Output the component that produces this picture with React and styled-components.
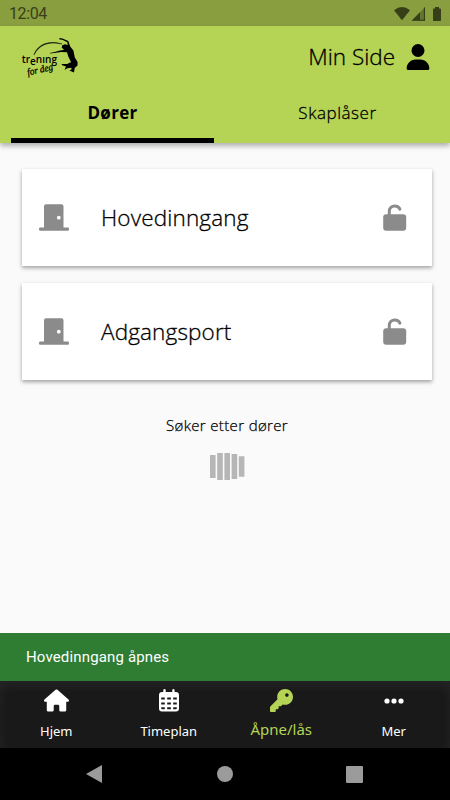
import React, { useState } from "react";
import styled, { createGlobalStyle } from "styled-components";
import { FaHouse, FaKey, FaUser } from "react-icons/fa6";

const GlobalStyle = createGlobalStyle`
  * {
    box-sizing: border-box;
  }
  body {
    margin: 0;
    background: #fafafa;
    font-family: "Open Sans", "Noto Sans", sans-serif;
  }
`;

const Screen = styled.div`
  width: 450px;
  height: 800px;
  display: flex;
  flex-direction: column;
  overflow: hidden;
  background: #fafafa;
`;

const StatusBar = styled.div`
  height: 26px;
  flex-shrink: 0;
  padding: 1px 8px 0 9px;
  display: flex;
  align-items: center;
  justify-content: space-between;
  background: #899e3f;
  color: #373f19;
  font-family: Roboto, sans-serif;
  font-size: 16px;
  letter-spacing: -0.4px;
`;

const Header = styled.header`
  height: 117px;
  flex-shrink: 0;
  display: flex;
  flex-direction: column;
  background: #b5d355;
  box-shadow: 0 3px 5px rgba(0, 0, 0, 0.3);
`;

const TopBar = styled.div`
  height: 61px;
  padding: 0 19px 0 20px;
  display: flex;
  align-items: center;
  justify-content: space-between;
`;

const MyPage = styled.a`
  display: flex;
  align-items: center;
  gap: 10px;
  color: #000;
  font-size: 22.5px;
  line-height: 30px;
  font-weight: 300;
  -webkit-text-stroke: 0.3px #000;
  padding-top: 1px;
`;

const Tabs = styled.div`
  flex: 1;
  display: flex;
`;

const Tab = styled.div`
  flex: 1;
  display: flex;
  flex-direction: column;
  align-items: center;
  justify-content: space-between;
  padding-top: 13px;
  font-size: 17px;
  line-height: 26px;
  cursor: pointer;
  font-weight: ${(props) => (props.$active ? 700 : 300)};
  letter-spacing: ${(props) => (props.$active ? 0.3 : 0.55)}px;
  -webkit-text-stroke: ${(props) => (props.$active ? 0 : 0.3)}px #000;
`;

const Indicator = styled.div`
  width: 203px;
  height: 5px;
  background: ${(props) => (props.$active ? "#000" : "transparent")};
`;

const Content = styled.main`
  flex: 1;
  padding: 26px 18px 0 22px;
  display: flex;
  flex-direction: column;
  gap: 17px;
`;

const Card = styled.div`
  height: 97px;
  padding: 0 25px 0 17px;
  display: flex;
  align-items: center;
  background: #fff;
  color: #8b8b8b;
  box-shadow: 0 2px 4px rgba(0, 0, 0, 0.36);
`;

const CardTitle = styled.span`
  flex: 1;
  margin-left: 32px;
  color: #000;
  font-size: 22.5px;
  line-height: 30px;
  font-weight: 300;
  letter-spacing: 0.15px;
  -webkit-text-stroke: 0.3px #000;
`;

const Searching = styled.div`
  margin-top: 17px;
  display: flex;
  flex-direction: column;
  align-items: center;
  gap: 17px;
  color: #000;
  font-size: 15px;
  font-weight: 300;
  letter-spacing: 0.35px;
  -webkit-text-stroke: 0.25px #000;
  line-height: 22px;
`;

const Snackbar = styled.div`
  height: 48px;
  flex-shrink: 0;
  padding-left: 26px;
  display: flex;
  align-items: center;
  background: #2e7d32;
  color: #fff;
  font-family: Roboto, sans-serif;
  font-size: 15px;
  letter-spacing: 0.15px;
`;

const BottomNav = styled.nav`
  height: 67px;
  flex-shrink: 0;
  display: flex;
  background: #191919;
  box-shadow: inset 0 5px 12px rgba(255, 255, 255, 0.05);
`;

const NavItem = styled.div`
  flex: 1;
  padding-top: 7px;
  display: flex;
  flex-direction: column;
  align-items: center;
  color: ${(props) => (props.$active ? "#b5d355" : "#fff")};
`;

const NavIcon = styled.div`
  height: 25px;
  display: flex;
  align-items: center;
`;

const NavLabel = styled.span`
  margin-top: ${(props) => (props.$active ? 4 : 6)}px;
  font-family: "Noto Sans", sans-serif;
  font-size: ${(props) => (props.$active ? 15 : 13)}px;
  line-height: 24px;
`;

const SystemBar = styled.div`
  height: 52px;
  flex-shrink: 0;
  padding: 0 87px 0 86px;
  display: flex;
  align-items: center;
  justify-content: space-between;
  background: #000;
`;

const Logo = () => (
  <svg width="60" height="44" viewBox="20 34 60 44">
    <path
      d="M34 54C36 46 46 38 62 43C48 40 39 44 34 54Z"
      stroke="#000"
      strokeWidth="0.4"
    />
    <path d="M59.3 37.1L62.5 37.4L68.3 40.1L70.2 45.6L73.4 49.5L74.8 56.5L77.6 61L77.5 64.5L74.7 67L74 71.4L69.4 69.6L71.5 68.4L71.4 66.8L67.3 67.2L64.5 69L66 65.4L61.6 64.1L62 62.9L67.2 63L70 61.4L71.2 61.6L68.3 55.6L67 51.2L61 50.9L54.3 52.1L50 52.6L49.8 51.9L54.7 51L59.8 49.5L64 49.1L61.7 46.5L62.3 44.2L65 43.2L67.7 44L67.3 41.2L62.3 38.8L59.5 38.6Z" />
    <text
      x="21.7"
      y="62"
      fontFamily="Open Sans"
      fontWeight="600"
      fontSize="11.5"
      textLength="35.3"
      lengthAdjust="spacingAndGlyphs"
    >
      tr<tspan dy="2">e</tspan><tspan dy="-2">nıng</tspan>
    </text>
    <text
      x="28"
      y="74.6"
      transform="rotate(-13 28 74.6)"
      fontFamily="Liberation Serif"
      fontStyle="italic"
      fontSize="10"
      stroke="#000"
      strokeWidth="0.3"
      textLength="26"
      lengthAdjust="spacingAndGlyphs"
    >
      for deg
    </text>
  </svg>
);

const StatusIcons = () => (
  <svg width="48" height="16" viewBox="0 0 48 16" fill="currentColor">
    <path d="M0 4.2Q8 -2 16 4.2L8 14.2Z" />
    <path d="M31 1.2V14.8H17.6Z" opacity="0.45" />
    <path d="M26 6.2V14.8H17.6ZM29.9 2V14.8H31V1Z" />
    <path d="M25 13.7H31V14.8H25Z" />
    <path d="M41 1h4v1.5h1.2q.8 0 .8.8v10.9q0 .8-.8.8h-6.4q-.8 0-.8-.8V3.3q0-.8.8-.8H41Z" />
  </svg>
);

const DoorIcon = () => (
  <svg width="30" height="27" viewBox="0 0 30 27" fill="currentColor">
    <path
      fillRule="evenodd"
      d="M7 .3h15.500q2 0 2 2v21.200h4.300q1.200 0 1.200 1.200v.8q0 1.200-1.200 1.200H1.200Q0 26.700 0 25.500v-.8q0-1.200 1.200-1.200H5V2.300q0-2 2-2Zm12.800 11.500a1.900 1.900 0 1 0 0 3.800a1.900 1.900 0 1 0 0-3.800Z"
    />
  </svg>
);

const UnlockIcon = () => (
  <svg width="24" height="27" viewBox="0 0 24 27">
    <path
      d="M6.300 12V7.600C6.300 3.900 8.800 2 11.700 2C14.200 2 16.100 3.300 16.900 5.200"
      fill="none"
      stroke="currentColor"
      strokeWidth="3"
      strokeLinecap="round"
    />
    <rect x="0.200" y="10.300" width="23" height="16.500" rx="3" fill="currentColor" />
  </svg>
);

const CalendarIcon = () => (
  <svg width="20" height="23" viewBox="0 0 20 23" fill="currentColor">
    <path
      fillRule="evenodd"
      d="M5.500 0q1.200 0 1.200 1.200V3h6.600V1.200Q13.300 0 14.400 0t1.200 1.200V3h1.200Q20 3 20 6v13.500q0 3-3 3H3q-3 0-3-3V6q0-3 3-3h1.300V1.200Q4.300 0 5.500 0ZM2.200 8.500v2h3.600v-2Zm6 0v2h3.700v-2Zm6 0v2h3.600v-2Zm-12 5v2h3.600v-2Zm6 0v2h3.700v-2Zm6 0v2h3.600v-2Zm-12 4.800v1q0 1 1 1h2.600v-2Zm6 0v2h3.700v-2Zm6 0v2h2.600q1 0 1-1v-1Z"
    />
  </svg>
);

const DotsIcon = () => (
  <svg width="20" height="6" viewBox="0 0 20 6" fill="currentColor">
    <circle cx="3" cy="3" r="2.6" />
    <circle cx="10" cy="3" r="2.6" />
    <circle cx="17" cy="3" r="2.6" />
  </svg>
);

const bars = [23, 27, 27, 25, 20.5];

const Loader = () => (
  <svg width="35" height="28" viewBox="0 0 35 28" fill="#b6b6b6">
    {bars.map((height, i) => (
      <rect key={i} x={i * 7.2} y={13.5 - height / 2} width="5.6" height={height} />
    ))}
  </svg>
);

const doors = ["Hovedinngang", "Adgangsport"];
const tabs = ["Dører", "Skaplåser"];

const navItems = [
  { label: "Hjem", icon: <FaHouse size={25} /> },
  { label: "Timeplan", icon: <CalendarIcon /> },
  { label: "Åpne/lås", icon: <FaKey size={23} />, active: true },
  { label: "Mer", icon: <DotsIcon /> },
];

const App = () => {
  const [tab, setTab] = useState("Dører");

  return (
    <>
      <GlobalStyle />
      <Screen>
        <StatusBar>
          <span>12:04</span>
          <StatusIcons />
        </StatusBar>
        <Header>
          <TopBar>
            <Logo />
            <MyPage>
              Min Side
              <FaUser size={26} />
            </MyPage>
          </TopBar>
          <Tabs>
            {tabs.map((name) => (
              <Tab key={name} $active={tab === name} onClick={() => setTab(name)}>
                {name}
                <Indicator $active={tab === name} />
              </Tab>
            ))}
          </Tabs>
        </Header>
        <Content>
          {doors.map((door) => (
            <Card key={door}>
              <DoorIcon />
              <CardTitle>{door}</CardTitle>
              <UnlockIcon />
            </Card>
          ))}
          <Searching>
            Søker etter dører
            <Loader />
          </Searching>
        </Content>
        <Snackbar>Hovedinngang åpnes</Snackbar>
        <BottomNav>
          {navItems.map((item) => (
            <NavItem key={item.label} $active={item.active}>
              <NavIcon>{item.icon}</NavIcon>
              <NavLabel $active={item.active}>{item.label}</NavLabel>
            </NavItem>
          ))}
        </BottomNav>
        <SystemBar>
          <svg width="16" height="18" viewBox="0 0 16 18" fill="#9b9b9b">
            <path d="M16 0V18L0 9Z" />
          </svg>
          <svg width="18" height="16" viewBox="0 0 18 16" fill="#9b9b9b">
            <circle cx="10" cy="8" r="8" />
          </svg>
          <svg width="17" height="17" viewBox="0 0 17 17" fill="#9b9b9b">
            <rect width="17" height="17" rx="1" />
          </svg>
        </SystemBar>
      </Screen>
    </>
  );
};

export default App;
